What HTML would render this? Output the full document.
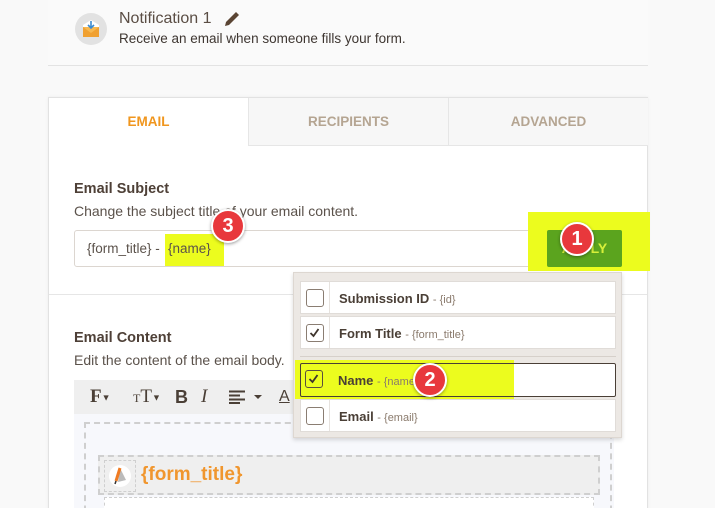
<!DOCTYPE html>
<html><head><meta charset="utf-8"><style>
*{box-sizing:border-box;margin:0;padding:0}
html,body{width:715px;height:508px;overflow:hidden}
body{background:#f9f9f9;font-family:"Liberation Sans",sans-serif;position:relative;color:#4a3f36}
.abs{position:absolute}
.card{left:48px;top:0;width:600px;height:66px;background:#fafafa;border-bottom:1px solid #e3e3e3}
.panel{left:48px;top:97px;width:600px;height:420px;background:#fff;border:1px solid #e2e2e2;box-shadow:0 0 3px rgba(0,0,0,.06)}
.tab{top:0;height:48px;line-height:48px;text-align:center;font-size:13.5px;font-weight:bold;color:#b5a592;background:#f7f7f7;border-bottom:1px solid #e6e6e6;border-left:1px solid #e6e6e6}
h3{font-size:14.5px;font-weight:bold;color:#4e4037}
.desc{font-size:14px;color:#5b524b}
.item{left:300px;width:316px;height:33px;background:#fff;border:1px solid #e0dcd8;font-size:13px;font-weight:bold;color:#4a3f36}
.item .cb{position:absolute;left:5px;top:7px;width:18px;height:18px;border:1.5px solid #8a7d72;border-radius:3px;background:#fff}
.item .sep{position:absolute;left:28px;top:0;bottom:0;border-left:1px solid #e6e2de}
.item .t{position:absolute;left:38px;top:9px}
.item small{font-weight:normal;font-size:11px;color:#8a7a6c}
.badge{width:34px;height:34px;border-radius:50%;background:#e8383c;border:2px solid #fff;color:#fff;font-weight:bold;font-size:20px;line-height:30px;text-align:center;box-shadow:0 1px 3px rgba(0,0,0,.4)}
.dash{border:2px dashed #cfcfcf}
</style></head><body>
<div class="abs card"></div>
<div class="abs" style="left:75px;top:13px;width:32px;height:32px;border-radius:50%;background:#e2e2e2"></div>
<svg class="abs" style="left:80px;top:17px" width="22" height="22" viewBox="0 0 22 22"><path d="M3 8 L11 3 L19 8 L19 19 L3 19Z" fill="#fff"/><rect x="3" y="10" width="16" height="10" fill="#f0a030"/><path d="M3 10 L11 16 L19 10" fill="#f7b850"/><path d="M11 4 V10 M8 8 L11 11 L14 8" stroke="#3a8ad0" stroke-width="1.6" fill="none"/></svg>
<div class="abs" style="left:119px;top:10px;font-size:16px;color:#5a4d44">Notification 1</div>
<svg class="abs" style="left:223px;top:11px" width="18" height="16" viewBox="0 0 18 16"><path d="M2 15 L3 11 L13 1 L16 4 L6 14Z" fill="#5a4433"/></svg>
<div class="abs" style="left:119px;top:31px;font-size:13.5px;color:#3e3631">Receive an email when someone fills your form.</div>

<div class="abs panel">
 <div class="abs tab" style="left:0;width:199px;background:#fff;color:#f0961e;border-left:none;border-bottom:none">EMAIL</div>
 <div class="abs tab" style="left:199px;width:200px">RECIPIENTS</div>
 <div class="abs tab" style="left:399px;width:200px">ADVANCED</div>
 <div class="abs" style="left:0;top:196px;width:598px;border-top:1px solid #e6e6e6"></div>
</div>
<h3 class="abs" style="left:74px;top:181px">Email Subject</h3>
<div class="abs desc" style="left:74px;top:203px">Change the subject title of your email content.</div>
<div class="abs" style="left:74px;top:230px;width:465px;height:37px;border:1px solid #dcd6d0;border-radius:3px;background:#fff"></div>
<div class="abs" style="left:165px;top:234px;width:59px;height:32px;background:#ecfc1e"></div>
<div class="abs" style="left:87px;top:241px;font-size:13.5px;color:#5b524b">{form_title} -</div>
<div class="abs" style="left:168px;top:241px;font-size:13.5px;color:#5b524b">{name}</div>
<div class="abs" style="left:528px;top:212px;width:122px;height:59px;background:#ecfc1e"></div>
<div class="abs" style="left:547px;top:230px;width:75px;height:37px;background:#5ba41e;border-radius:2px;color:#d7f03a;font-weight:bold;font-size:14px;line-height:37px;text-align:center">APPLY</div>
<div class="abs badge" style="left:560px;top:222px">1</div>
<div class="abs badge" style="left:211px;top:209px">3</div>

<h3 class="abs" style="left:74px;top:330px">Email Content</h3>
<div class="abs desc" style="left:74px;top:352px">Edit the content of the email body.</div>
<div class="abs" style="left:74px;top:380px;width:540px;height:34px;background:#efefef"></div>
<div class="abs" style="left:90px;top:386px;font-size:19px;font-weight:bold;font-family:'Liberation Serif',serif;color:#4a3f36">F<span style="font-size:9px;vertical-align:middle">▼</span></div>
<div class="abs" style="left:133px;top:386px;font-size:19px;font-family:'Liberation Serif',serif;color:#4a3f36"><span style="font-size:12px">T</span>T<span style="font-size:9px;vertical-align:middle">▼</span></div>
<div class="abs" style="left:175px;top:387px;font-size:18px;font-weight:bold;color:#4a3f36">B</div>
<div class="abs" style="left:201px;top:386px;font-size:19px;font-style:italic;font-family:'Liberation Serif',serif;color:#4a3f36">I</div>
<svg class="abs" style="left:228px;top:390px" width="36" height="14" viewBox="0 0 36 14"><path d="M1 1.5H17M1 5.5H12M1 9.5H17M1 13H12" stroke="#4a3f36" stroke-width="2"/><path d="M26 5L30 9L34 5Z" fill="#4a3f36"/></svg>
<div class="abs" style="left:279px;top:388px;font-size:16px;color:#4a3f36;text-decoration:underline">A</div>
<div class="abs" style="left:74px;top:414px;width:540px;height:100px;background:#f7f8fc"></div>
<div class="abs dash" style="left:84px;top:422px;width:528px;height:100px"></div>
<div class="abs dash" style="left:98px;top:455px;width:502px;height:40px;background:#efefef"></div>
<div class="abs dash" style="left:104px;top:460px;width:32px;height:32px;border-width:1px"></div>
<div class="abs" style="left:109px;top:465px;width:22px;height:22px;border-radius:50%;background:#fff"></div>
<svg class="abs" style="left:111px;top:466px" width="18" height="20" viewBox="0 0 18 20"><path d="M9 2 L15 14 L7 16Z" fill="#bbb"/><path d="M9 2 L5 15" stroke="#f07b22" stroke-width="3"/><path d="M5 15 L4 18" stroke="#333" stroke-width="1.5"/></svg>
<div class="abs" style="left:141px;top:464px;font-size:19px;font-weight:bold;color:#f0962e">{form_title}</div>
<div class="abs dash" style="left:104px;top:497px;width:490px;height:20px;border-width:1px;background:#fff"></div>

<div class="abs" style="left:293px;top:272px;width:329px;height:166px;background:#ece8e4;border:1px solid #ddd7d1;box-shadow:0 2px 4px rgba(0,0,0,.15)"></div>
<div class="abs" style="left:300px;top:356px;width:316px;border-top:1px solid #d6d0ca"></div>
<div class="abs item" style="top:281px"><div class="cb"></div><div class="sep"></div><div class="t">Submission ID <small>- {id}</small></div></div>
<div class="abs item" style="top:316px"><div class="cb"><svg width="15" height="15" viewBox="0 0 15 15" style="display:block"><path d="M3.5 8L6.5 11L11.5 4" stroke="#3e342d" stroke-width="1.8" fill="none"/></svg></div><div class="sep"></div><div class="t">Form Title <small>- {form_title}</small></div></div>
<div class="abs item" style="top:399px"><div class="cb"></div><div class="sep"></div><div class="t">Email <small>- {email}</small></div></div>
<div class="abs" style="left:300px;top:363px;width:316px;height:34px;background:#fff"></div>
<div class="abs" style="left:295px;top:360px;width:219px;height:39px;background:#ecfc1e"></div>
<div class="abs" style="left:300px;top:363px;width:316px;height:34px;border:1px solid #4a3f36;border-radius:2px"></div>
<div class="abs" style="left:305px;top:370px;width:18px;height:18px;border:1.5px solid #5a4d3e;border-radius:3px"><svg width="15" height="15" viewBox="0 0 15 15" style="display:block"><path d="M3.5 8L6.5 11L11.5 4" stroke="#3e342d" stroke-width="1.8" fill="none"/></svg></div>
<div class="abs" style="left:338px;top:373px;font-size:13px;font-weight:bold;color:#4a3f36">Name <small style="font-weight:normal;font-size:11px;color:#8a7a6c">- {name}</small></div>
<div class="abs badge" style="left:413px;top:363px">2</div>
</body></html>
